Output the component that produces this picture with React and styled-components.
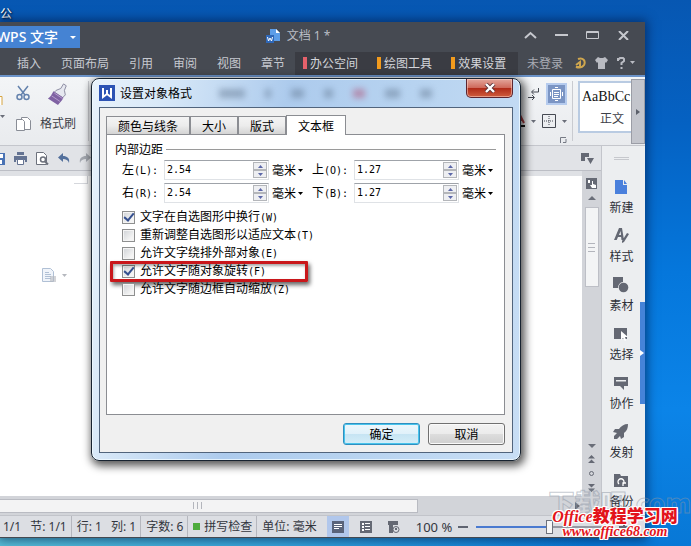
import React, { useState } from 'react';
import styled, { createGlobalStyle } from 'styled-components';

const uiFont = '"Noto Sans", "Noto Sans CJK SC", sans-serif';
const cjkFont = '"Noto Sans CJK SC", sans-serif';

const GlobalStyle = createGlobalStyle`
  * { box-sizing: border-box; }
  body { margin: 0; font-family: ${cjkFont}; font-size: 12px; line-height: 16px; }
  button, input, select { font: inherit; color: inherit; margin: 0; padding: 0; border: 0; background: none; }
  svg { display: block; flex: none; }
`;

//============================== desktop
const Desktop = styled.div`
  position: relative;
  display: flex;
  flex-direction: column;
  min-height: 100vh;
  overflow: hidden;
  padding: 0 46px 8px 0;
  background:
    linear-gradient(to right, #58bfd8 0, #35a5dc 40%, rgba(20, 130, 224, 0) 85%) bottom / 100% 8px no-repeat,
    linear-gradient(to bottom, #0757b2 0, #0561c2 22%, #0577dc 50%, #0b84e8 75%, #0878d6 100%);
`;
const DesktopLabel = styled.span`
  height: 22px;
  padding-top: 5px;
  color: #fff;
  text-shadow: 1px 1px 2px #000;
`;

//============================== main window
const Window = styled.div`
  display: flex;
  flex-direction: column;
  flex: 1;
  box-shadow: 0 0 10px 2px rgba(0, 20, 60, 0.6);
`;
const TitleBar = styled.header`
  display: flex;
  height: 30px;
  background: #464a52;
  color: #b9bcc4;
`;
const AppTab = styled.button`
  display: flex;
  align-items: center;
  justify-content: flex-end;
  gap: 12px;
  width: 80px;
  height: 22px;
  margin-top: 4px;
  padding-right: 4px;
  overflow: hidden;
  background: #4583d3;
  color: #fff;
  font-family: ${uiFont};
  font-size: 14px;
  font-weight: 500;
  white-space: nowrap;
`;
const DocTitle = styled.div`
  display: flex;
  flex: 1;
  align-items: center;
  justify-content: center;
  gap: 7px;
  padding-bottom: 2px;
  font-family: ${uiFont};
`;
const WindowButtons = styled.div`
  display: flex;
  align-items: center;
  gap: 18px;
  padding: 0 15px 4px 8px;
`;
const MenuBar = styled.nav`
  display: flex;
  height: 25px;
  padding-left: 7px;
  border-bottom: 2px solid #6b93c9;
  background: #464a52;
  color: #c6c9d0;
`;
const MenuItem = styled.button`
  padding: 0 10px 2px;
  white-space: nowrap;
`;
const ContextTabs = styled.div`
  display: flex;
  gap: 19px;
  padding: 0 12px 0 8px;
  background: #3a3c43;
  color: #d3d5da;
`;
const ContextTab = styled.button`
  display: flex;
  align-items: center;
  gap: 3px;
  padding-bottom: 2px;
  white-space: nowrap;

  &::before {
    content: '';
    width: 4px;
    height: 12px;
    background: ${props => props.$mark};
  }
`;
const Account = styled.div`
  display: flex;
  flex: 1;
  align-items: center;
  justify-content: flex-end;
  gap: 9px;
  padding: 0 10px 2px 0;
`;
const AccountLink = styled.a`
  margin-right: 2px;
  color: #a9acb4;
  text-decoration: none;
  white-space: nowrap;
`;
const IconButton = styled.button`
  display: flex;
  align-items: center;
  justify-content: center;
  gap: 4px;
`;

//============================== ribbon
const Ribbon = styled.section`
  display: flex;
  height: 69px;
  border-bottom: 1px solid #c4c6cc;
  background: linear-gradient(#f3f5f7, #e9ebee);
  color: #3d4048;
`;
const Tools = styled.div`
  display: flex;
  flex-direction: column;
  align-items: ${props => props.$align || 'center'};
  gap: 10px;
  width: ${props => props.$width};
  padding-top: 6px;
`;
const FontTools = styled(Tools)`
  gap: 5px;
`;
const ToolRow = styled.div`
  display: flex;
  align-items: center;
  gap: 6px;
  height: 22px;
`;
const Divider = styled.i`
  width: 1px;
  margin: 4px 5px;
  background: #c9cbd0;
`;
const Push = styled.div`
  flex: 1;
`;
const Selected = styled.button`
  display: flex;
  padding: 2px;
  background: #7b95c4;
  border: 2px solid #b5cbee;
`;
const StyleCard = styled.button`
  display: flex;
  flex-direction: column;
  align-items: flex-start;
  justify-content: center;
  gap: 4px;
  width: 53px;
  margin: 4px 0 12px;
  padding-left: 2px;
  overflow: hidden;
  border: 2px solid #b9cbe2;
  border-right: 0;
  background: #fff;
  white-space: nowrap;
`;
const StyleSample = styled.span`
  font: 14px/18px "Liberation Serif", serif;
  color: #111;
`;
const StyleName = styled.span`
  padding-left: 18px;
`;
const GalleryButton = styled.button`
  display: flex;
  align-items: center;
  justify-content: center;
  width: 14px;
  margin: 2px 0 1px;
  border: 1px solid #9b9da6;
  background: #c3c5cc;
`;

//============================== work area
const WorkArea = styled.div`
  display: flex;
  flex: 1;
`;
const MainColumn = styled.div`
  display: flex;
  flex: 1;
  flex-direction: column;
`;
const QuickBar = styled.div`
  display: flex;
  align-items: center;
  gap: 9px;
  height: 25px;
  padding: 0 7px 0 0;
  border-bottom: 1px solid #bcbec5;
  background: #e1e3e7;
`;
const Editor = styled.div`
  display: flex;
  flex: 1;
`;
const Page = styled.main`
  flex: 1;
  padding: 0 0 0 42px;
  border-top: 5px solid #dfe1e5;
  background: #fff;
`;
const MarginMark = styled.div`
  width: 46px;
  height: 92px;
  background:
    linear-gradient(#d5d7dc, #d5d7dc) right top / 1px 8px no-repeat,
    linear-gradient(#d5d7dc, #d5d7dc) right 8px / 14px 1px no-repeat;
  background-position: right 0 top 0, right 0 top 7px;
`;
const ScrollColumn = styled.div`
  display: flex;
  flex-direction: column;
  align-items: center;
  gap: 7px;
  width: 19px;
  padding: 7px 0 4px;
  background: #d2d4d9;
`;
const ScrollThumb = styled.div`
  display: flex;
  flex-direction: column;
  align-items: center;
  justify-content: center;
  gap: 3px;
  width: 14px;
  height: 80px;
  border: 1px solid #bdbfc6;
  background: #f3f4f5;
`;
const Grip = styled.i`
  width: ${props => props.$width || '7px'};
  height: ${props => props.$height || '1px'};
  background: #b3b5bc;
`;
const HScroll = styled.div`
  display: flex;
  align-items: center;
  justify-content: space-between;
  height: 19px;
  padding-right: 21px;
  background: #d2d4d9;
`;
const HThumb = styled.div`
  display: flex;
  align-items: center;
  justify-content: center;
  gap: 3px;
  width: 72%;
  height: 14px;
  padding-right: 22px;
  border: 1px solid #b9bbc2;
  border-left: 0;
  background: #f3f3f4;
`;

//============================== side panel
const SidePanel = styled.aside`
  position: relative;
  display: flex;
  flex-direction: column;
  align-items: center;
  gap: 11px;
  width: 44px;
  padding-right: 4px;
  border-left: 1px solid #c3c5cb;
  background: #eceef0;
`;
const PanelGrip = styled.div`
  width: 15px;
  height: 3px;
  margin: 11px 0 6px;
  border: solid #c6c8cd;
  border-width: 1px 0;
`;
const SideItem = styled.button`
  display: flex;
  flex-direction: column;
  align-items: center;
  gap: 4px;
  height: 38px;
  padding-top: 2px;
  color: #2d3038;
`;
const PanelHandle = styled.button`
  position: absolute;
  top: 156px;
  right: 0;
  display: flex;
  align-items: center;
  width: 5px;
  height: 102px;
  background: #4583d8;
`;

//============================== status bar
const StatusBar = styled.footer`
  display: flex;
  align-items: center;
  height: 23px;
  padding-left: 3px;
  border-top: 1px solid #c2c4ca;
  background: #dcdee3;
  border-bottom: 1px solid #454950;
  color: #33363e;
  font-family: ${uiFont};
  white-space: nowrap;
`;
const StatusGroup = styled.div`
  display: flex;
  align-items: center;
  gap: ${props => props.$gap || '9px'};
  height: 21px;
  padding: 0 4px 0 5px;
  border-right: ${props => (props.$last ? '0' : '1px solid #b5b7be')};
  margin-right: ${props => (props.$last ? '6px' : '0')};

  &:first-child { padding-left: 0; }
`;
const SpellMark = styled.i`
  width: 7px;
  height: 7px;
  background: #4dab3c;
`;
const ViewButton = styled.button`
  display: flex;
  align-items: center;
  justify-content: center;
  width: 22px;
  height: 21px;
  margin-right: 6px;
  background: ${props => (props.$active ? '#b1c7ec' : 'none')};
`;
const ZoomValue = styled.span`
  margin: 0 6px 0 5px;
  font-size: 13px;
`;
const ZoomSlider = styled.input`
  flex: 1;
  width: 60px;
  height: 16px;
  margin: 0 16px 0 8px;
  appearance: none;
  background: linear-gradient(to right, #4a7ad0 58%, #9598a2 58%) center / 100% 2px no-repeat;

  &::-webkit-slider-thumb {
    appearance: none;
    width: 7px;
    height: 14px;
    border: 1px solid #6e727c;
    background: #f8f8f8;
  }
`;

//============================== dialog
const Dialog = styled.form`
  position: absolute;
  top: 78px;
  left: 91px;
  width: 430px;
  padding: 0 7px 7px;
  border: 1px solid #172330;
  border-radius: 8px;
  background: linear-gradient(100deg, #e8f2fb 0, #d9e9f8 14%, #adcbed 40%, #b7d3f0 65%, #c8def5 100%);
  box-shadow: inset 0 0 0 1px rgba(240, 250, 255, 0.8), 2px 3px 9px 2px rgba(0, 0, 0, 0.65);
  color: #000;
`;
const DialogTitle = styled.div`
  display: flex;
  align-items: center;
  gap: 5px;
  height: 28px;
`;
const GlassBlurs = styled.div`
  display: flex;
  flex: 1;
  gap: 20px;
  padding-left: 22px;
  filter: blur(3px);
  opacity: 0.45;
`;
const Blur = styled.i`
  width: ${props => props.$width};
  height: 9px;
  background: ${props => props.$color || '#5b7089'};
`;
const CloseButton = styled.button`
  display: flex;
  align-items: center;
  justify-content: center;
  align-self: flex-start;
  width: 47px;
  height: 19px;
  border: 1px solid #5c2530;
  border-top: 0;
  border-radius: 0 0 5px 5px;
  background: linear-gradient(#e3a79c 0, #cf6a5b 48%, #b02b18 52%, #cf5d3e 100%);
  box-shadow: inset 0 0 0 1px rgba(255, 220, 210, 0.5);
`;
const DialogBody = styled.div`
  padding: 7px 7px 7px 6px;
  border: 1px solid #51647c;
  background: #f0f0f0;
`;
const Tabs = styled.div`
  display: flex;
  align-items: flex-end;
`;
const Tab = styled.button`
  height: ${props => (props.$active ? '20px' : '18px')};
  padding: 0 11px;
  border: 1px solid #8b8d92;
  border-bottom: 0;
  background: ${props => (props.$active ? '#fff' : 'linear-gradient(#f4f4f4, #ececec 50%, #d4d4d4)')};
  margin-bottom: ${props => (props.$active ? '-1px' : '0')};
`;
const TabPane = styled.div`
  min-height: 281px;
  padding: 5px 8px;
  border: 1px solid #8b8d92;
  background: #fff;
`;
const GroupTitle = styled.div`
  display: flex;
  align-items: center;
  gap: 3px;
  height: 18px;
  margin-bottom: 2px;

  &::after {
    content: '';
    flex: 1;
    height: 1px;
    background: #9a9a9a;
  }
`;
const Fields = styled.div`
  display: grid;
  grid-template-columns: 181px 1fr;
  column-gap: 9px;
  row-gap: 3px;
  padding-left: 7px;
`;
const Field = styled.div`
  display: flex;
  align-items: center;
  height: 20px;
`;
const FieldLabel = styled.label`
  width: 42px;
  white-space: nowrap;
`;
const Mono = styled.span`
  font-family: "DejaVu Sans Mono", monospace;
  font-size: 10px;
`;
const NumberBox = styled.div`
  display: flex;
  width: 105px;
  height: 20px;
  padding: 1px;
  border: 1px solid #dfe2e6;
  border-top-color: #9fa3a9;
`;
const NumberInput = styled.input`
  flex: 1;
  min-width: 0;
  padding-left: 1px;
  font-family: "DejaVu Sans Mono", monospace;
  font-size: 10px;
  outline: 0;
`;
const Spinner = styled.div`
  display: flex;
  flex-direction: column;
  width: 14px;
`;
const SpinButton = styled.button`
  display: flex;
  flex: 1;
  align-items: center;
  justify-content: center;
  border: 1px solid #b4b6ba;
  background: #eeeff2;
`;
const UnitSelect = styled.select`
  width: 24px;
  margin: 0 2px 0 3px;
  appearance: none;
`;
const Options = styled.div`
  margin-top: 5px;
  padding-left: 7px;
`;
const Option = styled.label`
  position: relative;
  display: flex;
  align-items: center;
  gap: 5px;
  height: 18px;
  white-space: nowrap;
`;
const Tick = styled.input`
  display: grid;
  place-content: center;
  width: 13px;
  height: 13px;
  appearance: none;
  border: 1px solid #8e8f8f;
  background: linear-gradient(135deg, #cfd2d6, #f4f4f4 75%);
  box-shadow: inset 0 0 0 1px #f4f4f4;

  &:checked::before {
    content: '';
    width: 4px;
    height: 8px;
    margin-bottom: 2px;
    border: solid #35508f;
    border-width: 0 2px 2px 0;
    transform: rotate(40deg);
  }
`;
const RedFrame = styled.i`
  position: absolute;
  top: -1px;
  left: -12px;
  width: 198px;
  height: 21px;
  border: 3px solid #c9171b;
  border-radius: 1px;
  box-shadow: 2px 3px 4px rgba(0, 0, 0, 0.6), inset 1px 2px 3px rgba(0, 0, 0, 0.35);
  pointer-events: none;
`;
const Actions = styled.div`
  display: flex;
  justify-content: flex-end;
  gap: 8px;
  margin-top: 8px;
`;
const ActionButton = styled.button`
  width: 77px;
  height: 22px;
  border: 1px solid ${props => (props.$primary ? '#2f8fc0' : '#707070')};
  border-radius: 3px;
  background: ${props =>
    props.$primary
      ? 'linear-gradient(#edf7fc, #e0f1fa 50%, #c6e4f3 51%, #d5eef8)'
      : 'linear-gradient(#f2f2f2, #ebebeb 50%, #dddddd 51%, #cfcfcf)'};
  box-shadow: inset 0 0 0 1px ${props => (props.$primary ? '#48c4ec' : '#fafafa')};
`;

//============================== site stamp
const Stamp = styled.div`
  position: absolute;
  right: 12px;
  bottom: 7px;
  display: flex;
  flex-direction: column;
  align-items: center;
  width: 128px;
  color: #e3141b;
  white-space: nowrap;
  text-shadow: 1px 0 #fff, -1px 0 #fff, 0 1px #fff, 0 -1px #fff, 1px 1px #fff, -1px -1px #fff, 1px -1px #fff, -1px 1px #fff;
`;
const StampName = styled.span`
  font: italic bold 16px/16px "Liberation Serif", serif;
`;
const StampCjk = styled.b`
  font-family: ${cjkFont};
  font-size: 17px;
  font-style: normal;
  font-weight: 900;
  line-height: 16px;
`;
const StampUrl = styled.span`
  font: italic bold 14px/14px "Liberation Serif", serif;
`;
const Ghost = styled.div`
  position: absolute;
  right: 0;
  bottom: 28px;
  font-size: 26px;
  font-weight: 900;
  line-height: 32px;
  color: transparent;
  -webkit-text-stroke: 1px rgba(140, 150, 165, 0.5);
  white-space: nowrap;
  pointer-events: none;
`;

const Caret = ({ color = '#6a6e79', size = 5, up }) => (
  <svg width={size} height={Math.ceil(size / 2)} viewBox="0 0 6 3" preserveAspectRatio="none" fill={color}>
    <path d={up ? 'M0 3h6L3 0z' : 'M0 0h6L3 3z'} />
  </svg>
);

const sideItems = [
  ['新建', <path key="p" fill="#4a80dc" d="M2 1h8v5h4v9H2zM11 1l3 4h-3z" />],
  ['样式', <path key="p" d="M1 12L6 0h3l2 12H8.500l-.4-3H5l-1.300 3zM6 7h2L7.600 3zM14 5l2 1-5 8-2 1v-2z" />],
  ['素材', <g key="p"><path d="M0 0h10v5a5.500 5.500 0 0 0-5 6H0z" /><circle cx="10.500" cy="10.500" r="4.800" /></g>],
  ['选择', <g key="p"><path d="M1 2h13v11H1z" /><path fill="#fff" d="M8 5v9l2-2 2 3 1-1-1-3h3z" /></g>],
  ['协作', <path key="p" fillRule="evenodd" d="M1 2h14v9h-4v4l-4-4H1zM3 5h10v1.500H3z" />],
  ['发射', <path key="p" d="M15 0c-4 0-7 2-9 5H2L0 8l4 1-3 3v3h3l3-3 1 3 3-2V9c3-2 4-5 4-9z" />],
  ['备份', <g key="p"><path d="M1 1h6l1 2h7v11H1z" /><path fill="none" stroke="#fff" strokeWidth="1.300" d="M6 11a3 3 0 1 1 4 0M10 13v-3h3" /></g>]
];

const margins = [
  ['left', '左', '(L):', '2.54'],
  ['top', '上', '(O):', '1.27'],
  ['right', '右', '(R):', '2.54'],
  ['bottom', '下', '(B):', '1.27']
];

const options = [
  ['文字在自选图形中换行', '(W)', true],
  ['重新调整自选图形以适应文本', '(T)', false],
  ['允许文字绕排外部对象', '(E)', false],
  ['允许文字随对象旋转', '(F)', true],
  ['允许文字随边框自动缩放', '(Z)', false]
];

const MarginField = ({ id, name, hotkey, initial }) => {
  const [value, setValue] = useState(initial);
  const step = amount => setValue((Number(value) + amount).toFixed(2));
  return (
    <Field>
      <FieldLabel htmlFor={id}>{name}<Mono>{hotkey}</Mono></FieldLabel>
      <NumberBox>
        <NumberInput id={id} value={value} onChange={e => setValue(e.target.value)} />
        <Spinner>
          <SpinButton type="button" aria-label="增加" onClick={() => step(0.1)}><Caret up color="#5c67a8" /></SpinButton>
          <SpinButton type="button" aria-label="减少" onClick={() => step(-0.1)}><Caret color="#5c67a8" /></SpinButton>
        </Spinner>
      </NumberBox>
      <UnitSelect aria-label="单位" defaultValue="毫米">
        <option>毫米</option>
      </UnitSelect>
      <Caret color="#000" />
    </Field>
  );
};

const FormatDialog = () => (
  <Dialog onSubmit={e => e.preventDefault()}>
    <DialogTitle>
      <svg width="16" height="16" viewBox="0 0 16 16">
        <path fill="#2c53b4" d="M0 0h16v16H0z" />
        <path fill="none" stroke="#fff" strokeWidth="2" d="M4 3v9l4-3 4 3V3M8 5v4" />
      </svg>
      <span>设置对象格式</span>
      <GlassBlurs>
        <Blur $width="26px" />
        <Blur $width="6px" />
        <Blur $width="13px" />
        <Blur $width="9px" />
        <Blur $width="12px" $color="#b03c62" />
        <Blur $width="15px" />
        <Blur $width="12px" />
      </GlassBlurs>
      <CloseButton type="button" aria-label="关闭">
        <svg width="12" height="10" viewBox="0 0 12 10">
          <path stroke="#5b3238" strokeWidth="4" d="M2 1l8 8M10 1L2 9" />
          <path stroke="#fff" strokeWidth="2.400" d="M2 1l8 8M10 1L2 9" />
        </svg>
      </CloseButton>
    </DialogTitle>
    <DialogBody>
      <Tabs role="tablist">
        {['颜色与线条', '大小', '版式', '文本框'].map(name => (
          <Tab key={name} type="button" role="tab" $active={name === '文本框'}>{name}</Tab>
        ))}
      </Tabs>
      <TabPane>
        <GroupTitle>内部边距</GroupTitle>
        <Fields>
          {margins.map(([id, name, hotkey, initial]) => (
            <MarginField key={id} id={id} name={name} hotkey={hotkey} initial={initial} />
          ))}
        </Fields>
        <Options>
          {options.map(([text, hotkey, checked]) => (
            <Option key={text}>
              <Tick type="checkbox" defaultChecked={checked} />
              <span>{text}<Mono>{hotkey}</Mono></span>
              {hotkey === '(F)' && <RedFrame />}
            </Option>
          ))}
        </Options>
      </TabPane>
      <Actions>
        <ActionButton $primary>确定</ActionButton>
        <ActionButton type="button">取消</ActionButton>
      </Actions>
    </DialogBody>
  </Dialog>
);

const RibbonBar = () => (
  <Ribbon>
    <Tools $width="13px" $align="flex-start">
      <ToolRow>
        <svg width="3" height="22"><path fill="#fff" stroke="#d6a441" d="M-4 13.500h6v10h-6" /></svg>
      </ToolRow>
      <Caret />
    </Tools>
    <Tools $width="20px">
      <IconButton aria-label="剪切">
        <svg width="14" height="22" viewBox="0 -2 14 22" fill="none" stroke="#6482ad" strokeWidth="1.500">
          <path d="M2 1l7 9M12 1L5 10" />
          <circle cx="3.500" cy="12" r="2.500" /><circle cx="10.500" cy="12" r="2.500" />
        </svg>
      </IconButton>
      <IconButton aria-label="复制">
        <svg width="16" height="22" viewBox="0 -1 16 22" fill="#fff" stroke="#898d96">
          <path d="M6.500 1.500h6l3 3v9h-9z" /><path d="M1.500 3.500h6l2 2v9h-8z" />
        </svg>
      </IconButton>
    </Tools>
    <Tools $width="50px">
      <IconButton aria-label="格式刷">
        <svg width="22" height="22" viewBox="0 0 22 24">
          <path fill="#e6e8f0" stroke="#85869b" d="M9 8l5-2 3-5 3 2-2 5 1 5-3 3-9-6z" />
          <path fill="#7f62a3" d="M6 9l11 7c-2 4-4 5-6 8L0 17c2-1 4-4 6-8z" />
          <path stroke="#b9a2d0" d="M4 14l9 6M7 11l9 6" />
        </svg>
      </IconButton>
      <span>格式刷</span>
    </Tools>
    <Divider />
    <Push />
    <FontTools $width="52px" $align="flex-end">
      <ToolRow>
        <svg width="13" height="14" viewBox="0 0 13 14" fill="none" stroke="#454952">
          <path d="M11.500 1v4H5M7 2.500L4.500 5 7 7.500M1 10.500h6M5 8l2.500 2.500L5 13" />
        </svg>
        <Selected aria-label="文字方向">
          <svg width="13" height="14" viewBox="0 0 13 14" fill="none" stroke="#fff">
            <path d="M2.500 2.500h8v9h-8zM4 5.500h5M4 7.500h5M4 9.500h4M5 .5h3M5 13.500h3M.5 5v4M12.500 5v4" />
          </svg>
        </Selected>
      </ToolRow>
      <ToolRow>
        <svg width="9" height="14" fill="none" stroke="#a53a3f" strokeWidth="2">
          <path d="M1 9l3-8 4 8M3 6h4" /><path stroke="#111" d="M0 12h9" />
        </svg>
        <Caret />
        <svg width="14" height="14" fill="none" stroke="#454952">
          <path d="M.5.5h13v13H.5z" strokeWidth="1" /><path strokeDasharray="1 1" d="M7 2v10M2 7h10" />
        </svg>
        <Caret />
      </ToolRow>
      <svg width="7" height="6" fill="none" stroke="#777b85"><path d="M6 .5H.5V6M3 5.500h3V2" /></svg>
    </FontTools>
    <Divider />
    <StyleCard>
      <StyleSample>AaBbCc</StyleSample>
      <StyleName>正文</StyleName>
    </StyleCard>
    <GalleryButton aria-label="更多样式">
      <svg width="4" height="6" fill="#5c606b"><path d="M0 0l4 3-4 3z" /></svg>
    </GalleryButton>
  </Ribbon>
);

const QuickAccess = () => (
  <QuickBar>
    <IconButton aria-label="保存">
      <svg width="5" height="13"><path fill="#4972b4" d="M0 1h5v12H0z" /><path fill="#fff" d="M0 2h3v4H0zM0 8h2v4H0z" /></svg>
    </IconButton>
    <IconButton aria-label="打印">
      <svg width="13" height="13" fill="#647392">
        <path d="M3 0h7v3H3zM0 4h13v6h-2V8H2v2H0z" /><path fill="#fff" stroke="#647392" d="M3.500 7.500h6v5h-6z" />
      </svg>
    </IconButton>
    <IconButton aria-label="打印预览">
      <svg width="13" height="13" fill="none" stroke="#6c717c">
        <path fill="#fff" d="M.5.5h7l3 3v9H.5z" /><circle cx="7" cy="7.500" r="2.500" strokeWidth="1.500" /><path strokeWidth="2" d="M9 9.500l3 3" />
      </svg>
    </IconButton>
    <IconButton aria-label="撤销">
      <svg width="12" height="10" fill="#53709c"><path d="M5 0v3c4 0 7 2 6 7-1-3-3-4-6-4v3L0 4.500z" /></svg>
    </IconButton>
    <IconButton aria-label="恢复">
      <svg width="12" height="10" fill="#a3a7af"><path d="M7 0v3C3 3 0 5 1 10c1-3 3-4 6-4v3l5-4.500z" /></svg>
    </IconButton>
    <Push />
    <IconButton aria-label="选项">
      <svg width="13" height="11" fill="#656974"><path d="M0 0h8v4H4v4H0zM6 5h7L9.500 11z" /></svg>
    </IconButton>
  </QuickBar>
);

const App = () => (
  <Desktop>
    <GlobalStyle />
    <DesktopLabel>公</DesktopLabel>
    <Window>
      <TitleBar>
        <AppTab>WPS 文字<Caret color="#fff" size={6} /></AppTab>
        <DocTitle>
          <svg width="14" height="14" viewBox="0 0 14 14">
            <path fill="#5c9de8" d="M4 0h6l4 4v8H4z" /><path fill="#fff" d="M10 0l4 4h-4z" />
            <path fill="#2f68b8" d="M0 6h8v8H0z" /><path fill="none" stroke="#fff" d="M1.500 8l1 4L4 9l1.500 3 1-4" />
          </svg>
          文档 1 *
        </DocTitle>
        <WindowButtons>
          <IconButton aria-label="收起">
            <svg width="13" height="8" fill="none" stroke="#c6c8ce" strokeWidth="2"><path d="M1 7l5.500-5L12 7" /></svg>
          </IconButton>
          <IconButton aria-label="最小化">
            <svg width="13" height="8" stroke="#c6c8ce" strokeWidth="2"><path d="M0 4h13" /></svg>
          </IconButton>
          <IconButton aria-label="最大化">
            <svg width="13" height="8" fill="none" stroke="#c6c8ce"><path d="M.5.5h12v7H.5zM0 1.500h13" /></svg>
          </IconButton>
          <IconButton aria-label="关闭窗口">
            <svg width="13" height="9" stroke="#c6c8ce" strokeWidth="2"><path d="M2 0l9 9M11 0L2 9" /></svg>
          </IconButton>
        </WindowButtons>
      </TitleBar>
      <MenuBar>
        {['插入', '页面布局', '引用', '审阅', '视图', '章节'].map(name => (
          <MenuItem key={name}>{name}</MenuItem>
        ))}
        <ContextTabs>
          <ContextTab $mark="#e5616b">办公空间</ContextTab>
          <ContextTab $mark="#f29b1d">绘图工具</ContextTab>
          <ContextTab $mark="#f29b1d">效果设置</ContextTab>
        </ContextTabs>
        <Account>
          <AccountLink href="#login">未登录</AccountLink>
          <IconButton aria-label="会员">
            <svg width="12" height="12" fill="none" stroke="#cfa64e" strokeWidth="2"><path d="M4 2c5-2 8 2 6 6-2 3-5 3-8 2h4V5L2 8" /></svg>
          </IconButton>
          <IconButton aria-label="皮肤">
            <svg width="13" height="12" fill="#b9bbc2"><path d="M3 0l2 1h3l2-1 3 3-2 3-1-1v7H3V5L2 6 0 3z" /></svg>
          </IconButton>
          <IconButton aria-label="帮助">
            <svg width="9" height="12" viewBox="0 0 9 12" fill="none" stroke="#b9bbc2" strokeWidth="2"><path d="M1 4V2h1l1-1h3l1 1v2L4.500 6v2M4.500 10v2" /></svg>
            <Caret color="#b9bbc2" />
          </IconButton>
        </Account>
      </MenuBar>
      <RibbonBar />
      <WorkArea>
        <MainColumn>
          <QuickAccess />
          <Editor>
            <Page>
              <MarginMark />
              <IconButton aria-label="粘贴选项">
                <svg width="16" height="15" viewBox="0 0 16 15" fill="#f0f4fa" stroke="#b0c0d5">
                  <path d="M.5.5h8l3 3v10H.5z" /><path d="M3 4.500h4M3 6.500h6M3 8.500h6M3 10.500h6" /><path fill="#b5b8be" stroke="none" d="M8 8h6v6H8z" opacity=".6" />
                </svg>
                <Caret color="#b5b8be" />
              </IconButton>
            </Page>
            <ScrollColumn>
              <svg width="11" height="11" fill="#656974"><path d="M0 0h11v11H0z" /><path fill="#fff" d="M2 2h2v3H2zM6 3h1v3l3 1v3H6L4 7h2z" /></svg>
              <Caret up size={8} />
              <ScrollThumb><Grip /><Grip /><Grip /></ScrollThumb>
              <Push />
              <Caret size={8} />
              <svg width="7" height="8" fill="#656974"><path d="M0 3.500h7L3.500 0zM0 8h7L3.500 4.500z" /></svg>
              <svg width="7" height="7" fill="none" stroke="#656974"><circle cx="3.500" cy="3.500" r="2" /></svg>
              <svg width="7" height="8" fill="#656974"><path d="M0 0h7L3.500 3.500zM0 4.500h7L3.500 8z" /></svg>
            </ScrollColumn>
          </Editor>
          <HScroll>
            <HThumb>
              <Grip $width="1px" $height="7px" /><Grip $width="1px" $height="7px" /><Grip $width="1px" $height="7px" />
            </HThumb>
            <svg width="5" height="8" fill="#656974"><path d="M0 0l5 4-5 4z" /></svg>
          </HScroll>
        </MainColumn>
        <SidePanel>
          <PanelGrip />
          {sideItems.map(([name, icon]) => (
            <SideItem key={name}>
              <svg width="16" height="16" fill="#646873">{icon}</svg>
              {name}
            </SideItem>
          ))}
          <PanelHandle aria-label="收起侧栏">
            <svg width="4" height="6" fill="#fff"><path d="M0 0l4 3-4 3z" /></svg>
          </PanelHandle>
        </SidePanel>
      </WorkArea>
      <StatusBar>
        <StatusGroup><span>1/1</span><span>节: 1/1</span></StatusGroup>
        <StatusGroup><span>行: 1</span><span>列: 1</span></StatusGroup>
        <StatusGroup>字数: 6</StatusGroup>
        <StatusGroup $gap="4px"><SpellMark />拼写检查</StatusGroup>
        <StatusGroup $last>单位: 毫米</StatusGroup>
        <ViewButton $active aria-label="页面视图">
          <svg width="12" height="12" fill="#59637b"><path d="M0 0h12v12H0z" /><path fill="#fff" d="M2 3h8v1H2zM2 5h8v1H2zM2 7h5v1H2z" /></svg>
        </ViewButton>
        <ViewButton aria-label="大纲视图">
          <svg width="12" height="12" fill="#656974"><path d="M0 0h12v12H0z" /><path fill="#fff" d="M2 2h2v2H2zM5 2h5v1H5zM2 5h2v2H2zM5 5h5v1H5zM2 8h2v2H2zM5 8h5v1H5z" /></svg>
        </ViewButton>
        <ViewButton aria-label="网页视图">
          <svg width="12" height="12" fill="#656974"><path d="M0 0h10v4H5v8H1V4H0z" /><circle cx="8" cy="8.500" r="3" fill="#dcdee3" stroke="#656974" /><path d="M7 7h2v2H7z" /></svg>
        </ViewButton>
        <ZoomValue>100 %</ZoomValue>
        <IconButton aria-label="缩小"><svg width="10" height="2" fill="#5f6471"><path d="M0 0h10v2H0z" /></svg></IconButton>
        <ZoomSlider type="range" aria-label="缩放" min="0" max="100" defaultValue="58" />
        <IconButton aria-label="放大"><svg width="26" height="10" stroke="#5f6471" strokeWidth="2"><path d="M0 5h10M5 0v10" /></svg></IconButton>
      </StatusBar>
    </Window>
    <FormatDialog />
    <Ghost aria-hidden="true">下载吧.com</Ghost>
    <Stamp>
      <StampName>Office<StampCjk>教程学习网</StampCjk></StampName>
      <StampUrl>www.office68.com</StampUrl>
    </Stamp>
  </Desktop>
);

export default App;
